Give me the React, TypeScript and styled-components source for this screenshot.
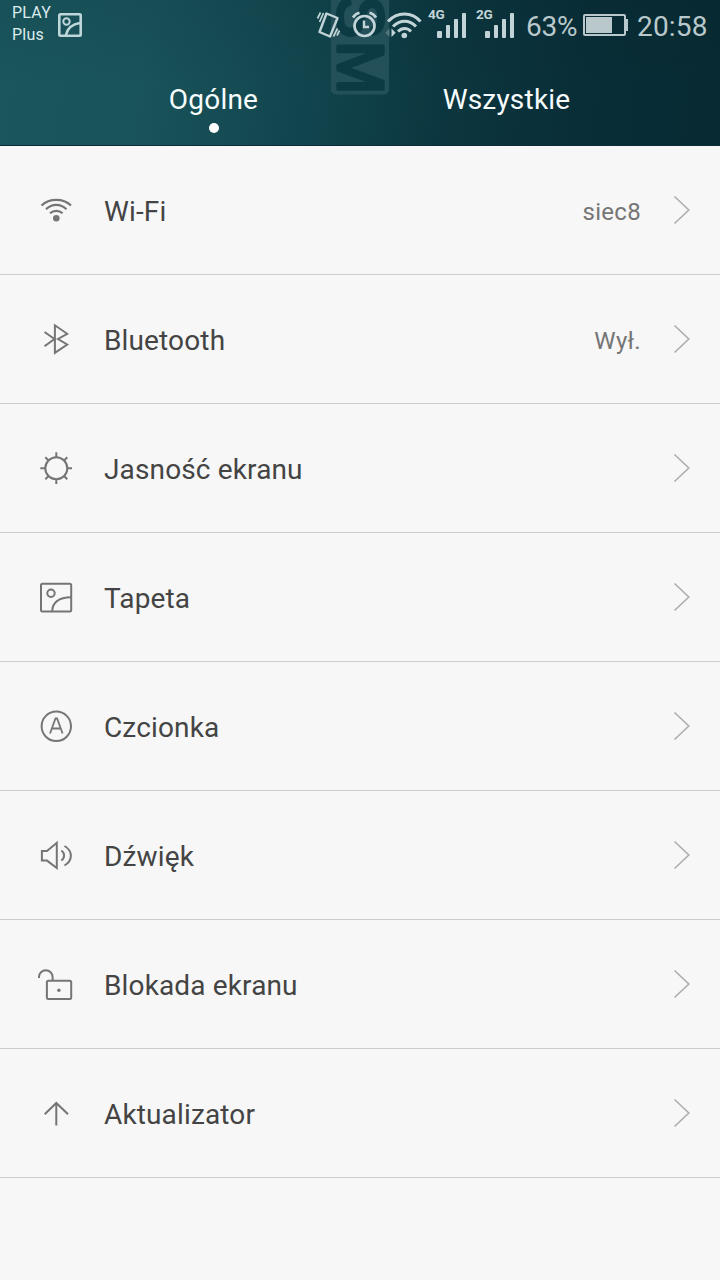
import React from "react";
import styled, { createGlobalStyle } from "styled-components";

const GlobalStyle = createGlobalStyle`
  * { box-sizing: border-box; }
  html, body { margin: 0; padding: 0; background: #f7f7f7; }
  body { font-family: Roboto, "Noto Sans", sans-serif; }
`;

const Screen = styled.main`
  width: 720px;
  height: 1280px;
  overflow: hidden;
  display: flex;
  flex-direction: column;
  background: #f7f7f7;
`;

const Header = styled.header`
  position: relative;
  height: 146px;
  flex: none;
  overflow: hidden;
  background:
    linear-gradient(180deg, rgba(0, 20, 28, 0.08), rgba(0, 20, 28, 0) 60%),
    linear-gradient(97deg, #1a565d 0%, #19535b 20%, #154b53 34%, #10434b 46%, #0c363f 62%, #092e37 80%, #072a33 100%);
  border-bottom: 1px solid #0b2c38;
`;

const Watermark = styled.svg`
  position: absolute;
  left: 331px;
  top: 0;
`;

const StatusBar = styled.div`
  position: relative;
  height: 50px;
  display: flex;
  align-items: flex-start;
  padding: 0 12px;
  color: #c3d4d8;
`;

const Carrier = styled.div`
  width: 46px;
  padding-top: 2px;
  font-size: 16px;
  line-height: 22px;
  letter-spacing: 0.2px;
  color: #dcebed;
`;

const StatusIcon = styled.svg<{ $gap?: number; $top?: number }>`
  flex: none;
  margin-left: ${(p) => p.$gap ?? 0}px;
  margin-top: ${(p) => p.$top ?? 0}px;
  overflow: visible;
`;

const StatusRight = styled.div`
  display: flex;
  align-items: flex-start;
  margin-left: auto;
`;

const Signal = styled.div<{ $gap: number }>`
  display: flex;
  margin-left: ${(p) => p.$gap}px;
  padding-top: 8px;
  width: 40px;
`;

const Network = styled.span`
  width: 9px;
  flex: none;
  font-size: 13.5px;
  font-weight: 700;
  line-height: 13px;
  letter-spacing: -0.2px;
  white-space: nowrap;
`;

const Bars = styled.div`
  display: flex;
  align-items: flex-end;
  gap: 4px;
  height: 25px;
  margin-top: 5px;
`;

const Bar = styled.i<{ $h: number; $w?: number }>`
  width: ${(p) => p.$w ?? 4}px;
  height: ${(p) => p.$h}px;
  border-radius: 1px;
  background: #c3d4d8;
`;

const StatusText = styled.span<{ $w: number; $gap: number; $spacing?: number }>`
  width: ${(p) => p.$w}px;
  margin-left: ${(p) => p.$gap}px;
  flex: none;
  padding-top: 10px;
  font-size: 28px;
  line-height: 33px;
  letter-spacing: ${(p) => p.$spacing ?? 0}px;
  white-space: nowrap;
  color: #b9c8cb;
`;

const Tabs = styled.nav`
  position: relative;
  display: flex;
  padding: 0 67px;
`;

const Tab = styled.div`
  flex: 1;
  display: flex;
  flex-direction: column;
  align-items: center;
  padding-top: 33px;
  font-size: 28px;
  line-height: 33px;
  letter-spacing: 0.2px;
  color: #f7fcfc;
`;

const Dot = styled.span`
  width: 10px;
  height: 10px;
  margin-top: 7px;
  border-radius: 50%;
  background: #fff;
`;

const List = styled.ul`
  margin: 0;
  padding: 0;
  list-style: none;
`;

const Row = styled.li`
  display: flex;
  align-items: center;
  height: 129px;
  padding: 0 28px 0 36px;
  border-bottom: 1px solid #cdcdcd;
`;

const RowIcon = styled.svg`
  flex: none;
  width: 40px;
  height: 40px;
  fill: none;
  stroke: #757575;
  stroke-width: 2;
`;

const Label = styled.span`
  flex: 1;
  margin-left: 28px;
  padding-top: 4px;
  font-size: 28px;
  line-height: 34px;
  letter-spacing: 0.14px;
  color: #444;
`;

const Value = styled.span`
  padding-top: 4px;
  margin-right: 32px;
  font-size: 24px;
  line-height: 30px;
  letter-spacing: 0.3px;
  color: #757575;
`;

const Chevron = styled.svg`
  flex: none;
  fill: none;
  stroke: #adadad;
  stroke-width: 1.6;
`;

/* Row glyphs are drawn on a 40x40 grid centred at 20,20. */
const icons = {
  wifi: (
    <>
      <path d="M5.5 15.5 C13.5 8 27 8 35 15.5 M10 19.2 C16 13.300 24.500 13.300 30.500 19.200 M14 23.300 C17.600 20 23 20 26.600 23.300" strokeWidth="2.200" />
      <circle cx="20.300" cy="28.300" r="3.300" fill="#757575" stroke="none" />
    </>
  ),
  bluetooth: <path d="M8.500 13 L18.500 20 L8.500 27.200 M18.900 6.300 V33.800 L31.200 25.500 L22 20 L31.200 14.800 Z" />,
  brightness: (
    <>
      <circle cx="20.300" cy="20.300" r="11" />
      <path d="M20.300 4.300V9.300 M20.300 31.300V36 M4.300 20.300H9.300 M31.300 20.300H36 M9.300 9.300L12.300 12.300 M31.300 9.300L28.300 12.300 M9.300 31.300L12.300 28.300 M31.300 31.300L28.300 28.300" />
    </>
  ),
  picture: (
    <>
      <rect x="5" y="6.800" width="30.200" height="27.700" rx="1.500" />
      <circle cx="15" cy="16.300" r="3.700" />
      <path d="M16.300 34 C16.300 26 22.500 20.300 35 20.300" />
    </>
  ),
  font: (
    <>
      <circle cx="20.300" cy="20.300" r="14.700" />
      <path d="M14 27.500 L19.500 12.500 H21.100 L26.600 27.500 M16 22.500 H24.600" strokeWidth="1.800" />
    </>
  ),
  sound: (
    <>
      <path d="M5.900 16 H11 L20.800 7.800 V33 L11 25.600 H5.900 Z" />
      <path d="M25.300 15.500 C29 18 29 23 25.300 25.500 M28.500 11 C37 16 37 25.500 28.500 30.500" />
    </>
  ),
  lock: (
    <>
      <rect x="10.900" y="16.700" width="24.300" height="18.300" rx="1.500" />
      <path d="M3 14 V12.900 A6.800 6.600 0 0 1 16.600 12.900 V16.700" />
      <circle cx="22.900" cy="26.300" r="1.700" fill="#757575" stroke="none" />
    </>
  ),
  update: <path d="M20.300 32.500 V10 M8.700 21.300 L20.300 10 L32 21.300" />,
};

const items: { icon: keyof typeof icons; label: string; value?: string }[] = [
  { icon: "wifi", label: "Wi-Fi", value: "siec8" },
  { icon: "bluetooth", label: "Bluetooth", value: "Wył." },
  { icon: "brightness", label: "Jasność ekranu" },
  { icon: "picture", label: "Tapeta" },
  { icon: "font", label: "Czcionka" },
  { icon: "sound", label: "Dźwięk" },
  { icon: "lock", label: "Blokada ekranu" },
  { icon: "update", label: "Aktualizator" },
];

function SignalMeter({ network, gap }: { network: string; gap: number }) {
  return (
    <Signal $gap={gap}>
      <Network>{network}</Network>
      <Bars>
        <Bar $h={7} $w={5} />
        <Bar $h={13} />
        <Bar $h={19} />
        <Bar $h={25} />
      </Bars>
    </Signal>
  );
}

export default function App() {
  return (
    <Screen>
      <GlobalStyle />
      <Header>
        <Watermark width="58" height="96" viewBox="0 0 58 96">
          <rect x="0" y="-20" width="58" height="114.500" rx="5" fill="#245059" />
          <g fill="#0c3b44" stroke="#0c3b44" strokeWidth="3.400" strokeLinejoin="round" fontFamily="Liberation Sans" fontSize="64">
            <text transform="translate(7 -4.500) rotate(90)">S</text>
            <text transform="translate(7 41) rotate(90)">M</text>
          </g>
        </Watermark>
        <StatusBar>
          <Carrier>
            PLAY
            <br />
            Plus
          </Carrier>
          <StatusIcon $top={13} width="24" height="24" fill="none" stroke="#bdd7da" strokeWidth="2.600">
            <rect x="1.300" y="1.300" width="21.400" height="21.400" rx="1" />
            <circle cx="8.500" cy="8.500" r="3.200" strokeWidth="2" />
            <path d="M8 22 C9.500 15.500 14.500 11 22 10" />
          </StatusIcon>
          <StatusRight>
            <StatusIcon $top={11} width="24" height="28" fill="none" stroke="#c3d4d8" strokeWidth="2">
              <path d="M9.500 2.500 L20.500 7 L13 25.500 L2.500 21 Z" strokeWidth="2.400" strokeLinejoin="round" />
              <path d="M3.500 1.500 L0.500 7.500 M6.500 2 L2.500 11 M20.500 17.500 L16.500 25.500 M22.500 19.500 L20 24.500" strokeWidth="1.700" />
            </StatusIcon>
            <StatusIcon $gap={11} $top={11} width="26" height="27" fill="none" stroke="#c3d4d8" strokeWidth="2.700">
              <circle cx="12.500" cy="15" r="10" />
              <path d="M12 9.500 V16 H17" strokeWidth="2.400" />
              <path d="M1 6.500 C2.500 4 4.500 2.500 7.500 1.700 M17.500 1.700 C20.500 2.500 22.500 4 24 6.500" />
            </StatusIcon>
            <StatusIcon $gap={8} $top={11} width="35" height="28" fill="none" stroke="#c3d4d8" strokeWidth="3">
              <path d="M2 10.500 C11 0.500 26 0.500 34.500 10.500 M7 15.500 C14 8.500 23.500 8.500 30 15.500 M12 20.500 C16 16.500 21.500 16.500 25 20.500" />
              <circle cx="18.300" cy="24.500" r="2.800" fill="#c3d4d8" stroke="none" />
              <path d="M5.500 17.500 V26 L9.700 21.800 Z" fill="#c3d4d8" stroke="none" />
              <path d="M3.500 17.500 V26 L-0.700 21.800 Z" fill="#54777e" stroke="none" />
            </StatusIcon>
            <SignalMeter network="4G" gap={7} />
            <SignalMeter network="2G" gap={8} />
            <StatusText $w={56} $gap={10} $spacing={-0.2}>63%</StatusText>
            <StatusIcon $gap={1} $top={14} width="46" height="22" fill="none" stroke="#b9c8cb" strokeWidth="2">
              <rect x="1" y="1" width="41" height="20" rx="1" />
              <rect x="3" y="3" width="26" height="16" fill="#b9c8cb" stroke="none" />
              <path d="M42 6 H44 V16 H42" />
            </StatusIcon>
            <StatusText $w={71} $gap={8} $spacing={0.2}>20:58</StatusText>
          </StatusRight>
        </StatusBar>
        <Tabs>
          <Tab>
            Ogólne
            <Dot />
          </Tab>
          <Tab>Wszystkie</Tab>
        </Tabs>
      </Header>
      <List>
        {items.map((item) => (
          <Row key={item.label}>
            <RowIcon viewBox="0 0 40 40">{icons[item.icon]}</RowIcon>
            <Label>{item.label}</Label>
            {item.value && <Value>{item.value}</Value>}
            <Chevron width="19" height="30" viewBox="0 0 19 30">
              <path d="M1.500 1.500 L15.800 15 L1.500 28.500" />
            </Chevron>
          </Row>
        ))}
      </List>
    </Screen>
  );
}
